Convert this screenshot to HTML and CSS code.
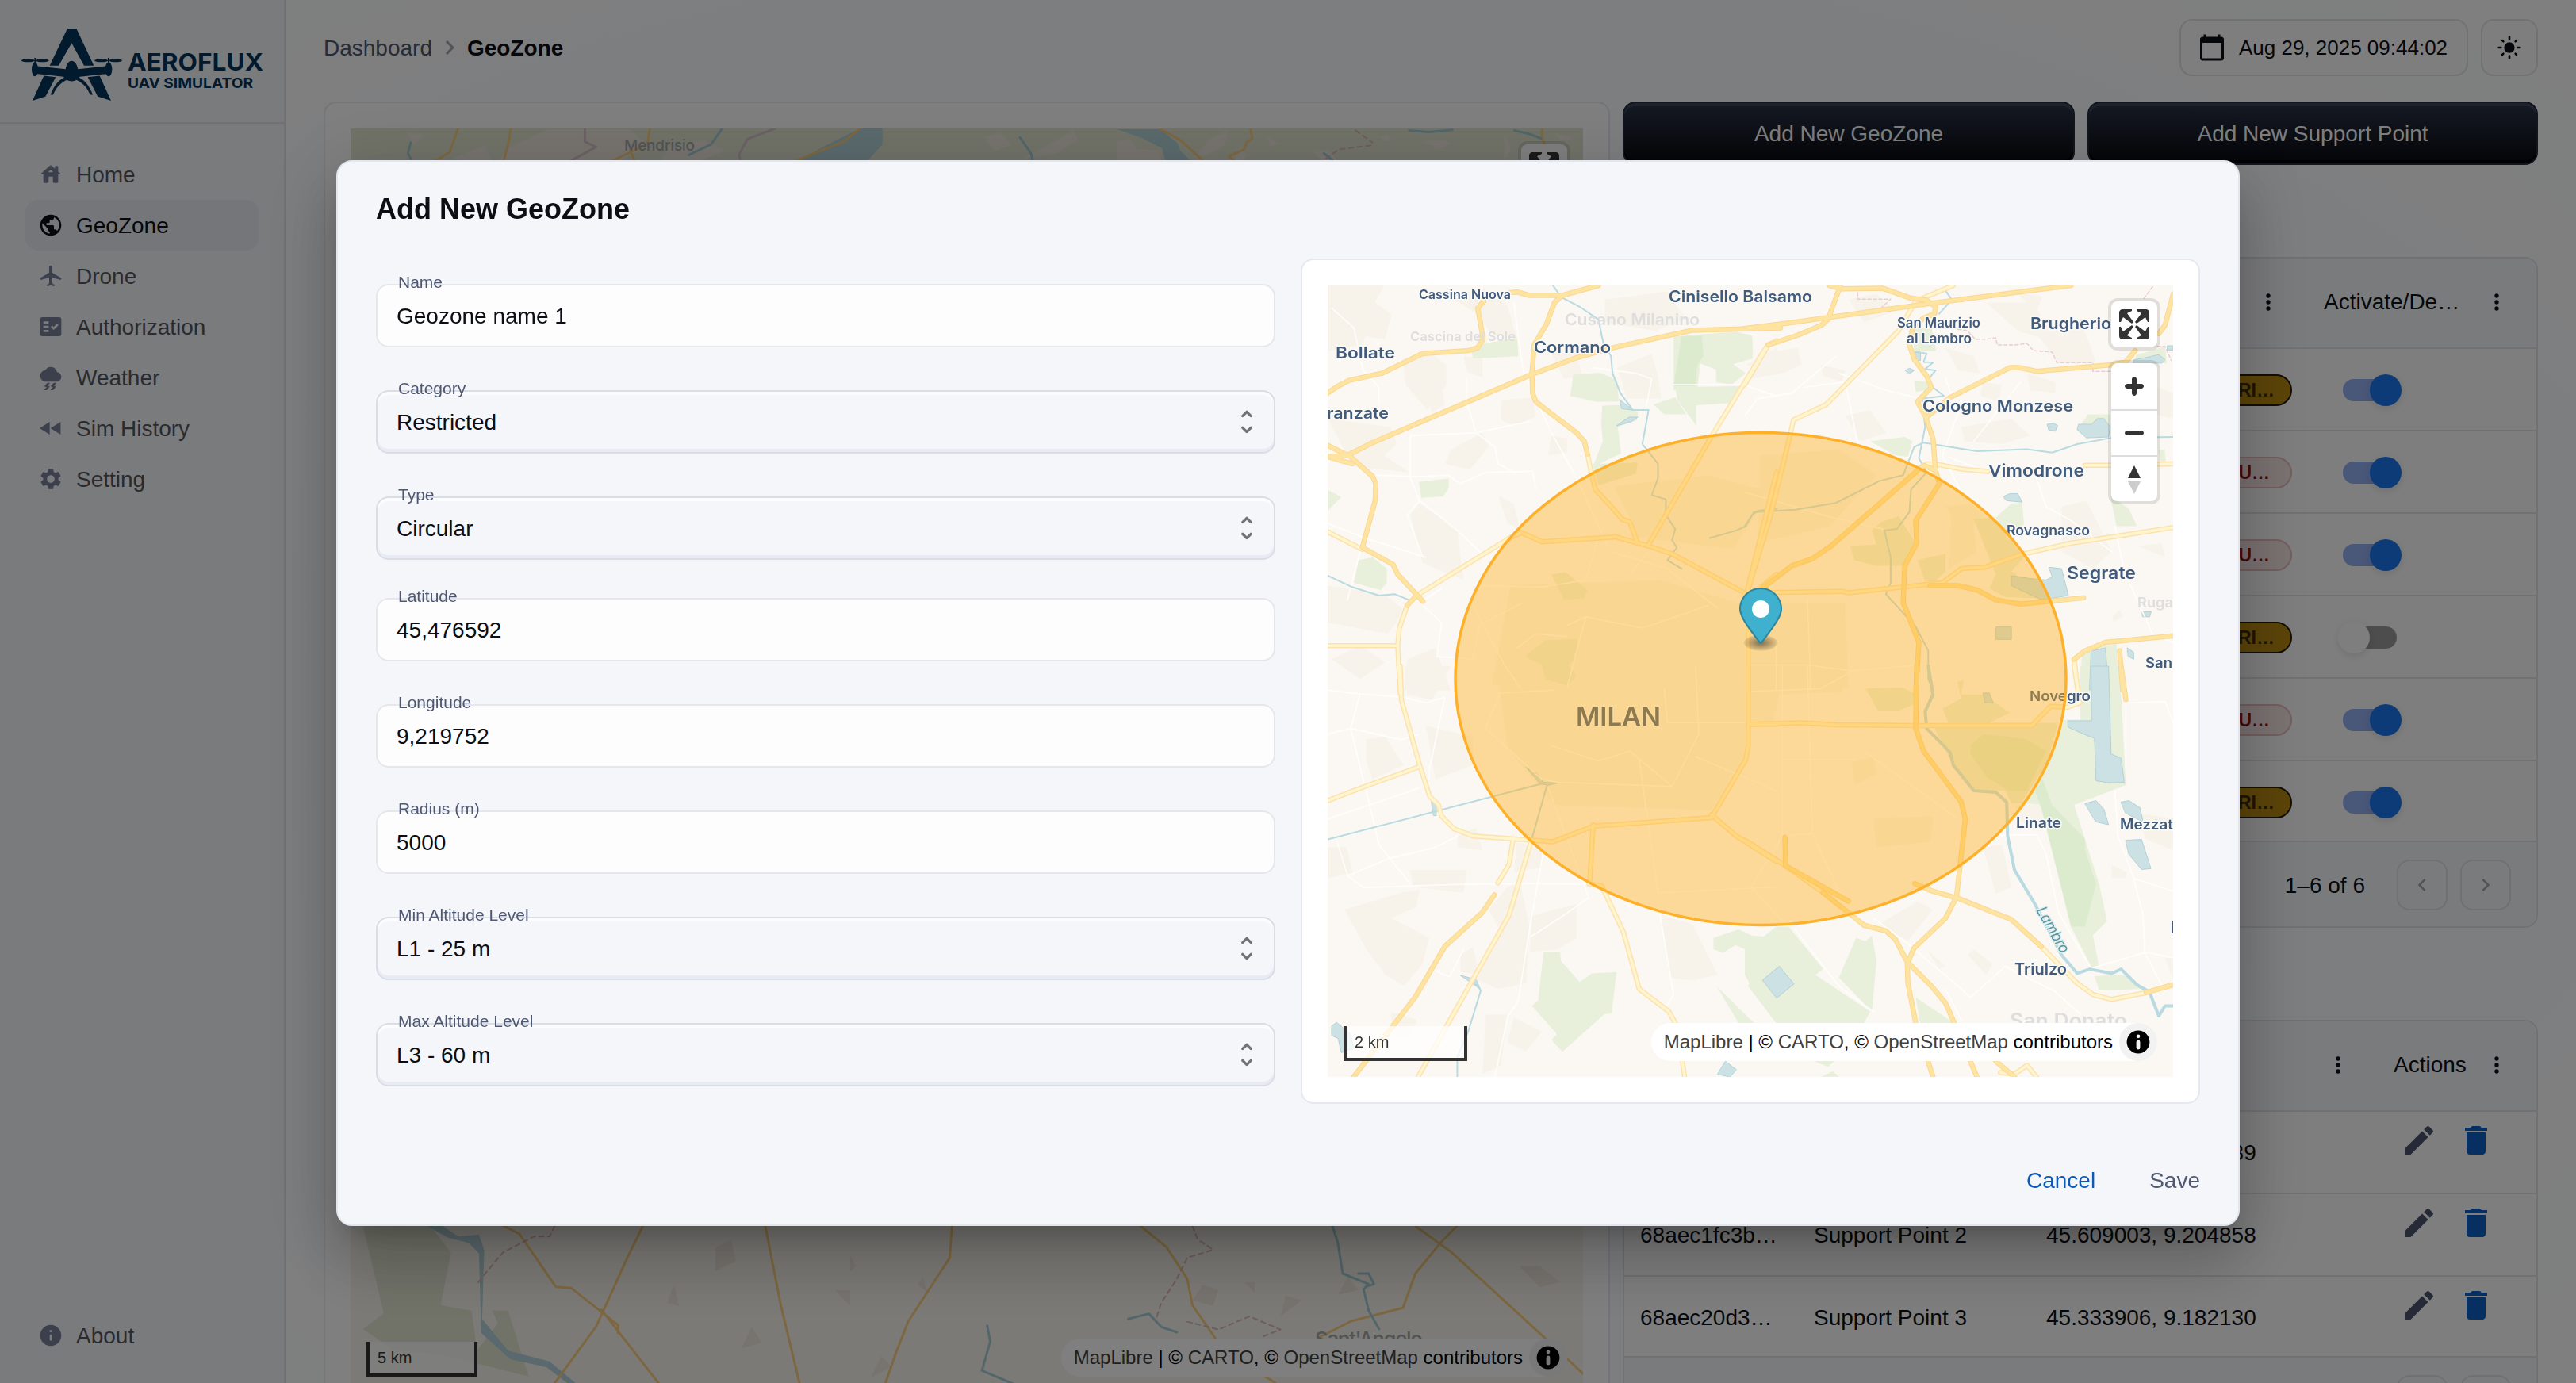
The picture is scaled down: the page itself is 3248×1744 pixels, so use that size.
FILE: index.html
```html
<!DOCTYPE html>
<html lang="en">
<head>
<meta charset="utf-8">
<title>Aeroflux UAV Simulator - GeoZone</title>
<link rel="stylesheet" href="styles.css">
</head>
<body>
<svg class="sprite" aria-hidden="true">
  <defs>
    <symbol id="i-more" viewBox="0 0 24 24"><circle cx="12" cy="6" r="2"/><circle cx="12" cy="12" r="2"/><circle cx="12" cy="18" r="2"/></symbol>
    <symbol id="i-info" viewBox="0 0 24 24"><path d="M12 2C6.48 2 2 6.48 2 12s4.48 10 10 10 10-4.48 10-10S17.52 2 12 2zm0 15c-.55 0-1-.45-1-1v-4c0-.55.45-1 1-1s1 .45 1 1v4c0 .55-.45 1-1 1zm1-8h-2V7h2v2z"/></symbol>
    <symbol id="i-edit" viewBox="0 0 24 24"><path d="M3 17.25V21h3.75L17.81 9.94l-3.75-3.75L3 17.25zM20.71 7.04c.39-.39.39-1.02 0-1.41l-2.34-2.34a1 1 0 0 0-1.41 0l-1.83 1.83 3.75 3.75 1.83-1.83z"/></symbol>
    <symbol id="i-delete" viewBox="0 0 24 24"><path d="M6 19c0 1.1.9 2 2 2h8c1.1 0 2-.9 2-2V7H6v12zM19 4h-3.5l-1-1h-5l-1 1H5v2h14V4z"/></symbol>
    <symbol id="i-prev" viewBox="0 0 24 24"><path d="M15.4 7.4 14 6l-6 6 6 6 1.4-1.4-4.6-4.6z"/></symbol>
    <symbol id="i-next" viewBox="0 0 24 24"><path d="M10 6 8.6 7.4l4.6 4.6-4.6 4.6L10 18l6-6z"/></symbol>
    <symbol id="i-unfold" viewBox="0 0 24 24"><path d="M12 5.83l2.46 2.46c.39.39 1.02.39 1.41 0 .39-.39.39-1.02 0-1.41L12.7 3.7a1 1 0 0 0-1.41 0L8.12 6.88c-.39.39-.39 1.02 0 1.41.39.39 1.02.39 1.41 0L12 5.83zm0 12.34l-2.46-2.46a1 1 0 0 0-1.41 0c-.39.39-.39 1.02 0 1.41l3.17 3.18c.39.39 1.02.39 1.41 0l3.17-3.17c.39-.39.39-1.02 0-1.41a1 1 0 0 0-1.41 0L12 18.17z"/></symbol>
    <symbol id="i-full" viewBox="0 0 29 29"><path d="M24 16v5.5c0 1.75-.75 2.5-2.5 2.5H16v-1l3-1.5-4-5.5 1-1 5.5 4 1.5-3h1zM6 16l1.5 3 5.5-4 1 1-4 5.5 3 1.5v1H7.5C5.75 24 5 23.25 5 21.5V16h1zm7-11v1l-3 1.5 4 5.5-1 1-5.5-4L6 13H5V7.5C5 5.75 5.75 5 7.5 5H13zm11 2.5V13h-1l-1.5-3-5.5 4-1-1 4-5.5-3-1.5V5h5.5c1.75 0 2.5.75 2.5 2.5z"/></symbol>
    <symbol id="i-attrib" viewBox="0 0 20 20"><path fill-rule="evenodd" d="M4 10a6 6 0 1 0 12 0 6 6 0 1 0-12 0m5-3a1 1 0 1 0 2 0 1 1 0 1 0-2 0m0 3a1 1 0 1 1 2 0v3a1 1 0 1 1-2 0"/></symbol>
  </defs>
</svg>

<div class="app">
  <aside class="sidebar">
    <div class="brand">
      <svg class="logo" viewBox="0 0 340 154" width="340" height="154">
        <g transform="scale(.3333 .4082)">
          <path d="M255 88h34l66 115h-37l-47-70-49 70h-34z"/>
          <path d="M166 234l45 4-39 60-49 13zM377 234l-45 4 38 60 50 13z"/>
          <path d="M136 204l112 10c4-17 12-26 23-26s20 9 24 26l112-10v24l-105 9c-8 9-18 14-31 14s-23-5-31-14l-104-9z"/>
          <ellipse cx="132" cy="214" rx="12" ry="22"/><ellipse cx="411" cy="214" rx="13" ry="22"/>
          <ellipse cx="106" cy="187" rx="26" ry="5"/><ellipse cx="160" cy="187" rx="25" ry="5"/>
          <ellipse cx="383" cy="187" rx="26" ry="5"/><ellipse cx="437" cy="187" rx="25" ry="5"/>
          <path d="M130 179h6v20h-6zM408 179h6v20h-6zM191 293c12-28 34-52 66-58l-4 12c-24 8-42 26-52 46zM351 293c-12-28-34-52-66-58l4 12c24 8 42 26 52 46z"/>
        </g>
        <text class="logo-name" x="161" y="88.500" textLength="171" lengthAdjust="spacingAndGlyphs">AEROFLUX</text>
        <text class="logo-sub" x="161" y="111" textLength="158" lengthAdjust="spacingAndGlyphs">UAV SIMULATOR</text>
      </svg>
    </div>
    <nav class="nav">
      <a class="nav-item"><svg class="ico" viewBox="0 0 24 24"><path d="M19 9.3V5c0-.55-.45-1-1-1h-1c-.55 0-1 .45-1 1v1.6l-3.33-3c-.38-.34-.96-.34-1.34 0l-8.36 7.53c-.34.3-.13.87.33.87H5v7c0 .55.45 1 1 1h3c.55 0 1-.45 1-1v-5h4v5c0 .55.45 1 1 1h3c.55 0 1-.45 1-1v-7h1.7c.46 0 .68-.57.33-.87L19 9.3zM10 10c0-1.1.9-2 2-2s2 .9 2 2h-4z"/></svg>Home</a>
      <a class="nav-item is-active"><svg class="ico" viewBox="0 0 24 24"><path d="M12 2C6.48 2 2 6.48 2 12s4.48 10 10 10 10-4.48 10-10S17.52 2 12 2zm-1 17.93c-3.95-.49-7-3.85-7-7.93 0-.62.08-1.21.21-1.79L9 15v1c0 1.1.9 2 2 2v1.93zm6.9-2.54c-.26-.81-1-1.39-1.9-1.39h-1v-3c0-.55-.45-1-1-1H8v-2h2c.55 0 1-.45 1-1V7h2c1.1 0 2-.9 2-2v-.41c2.93 1.19 5 4.06 5 7.41 0 2.08-.8 3.97-2.1 5.39z"/></svg>GeoZone</a>
      <a class="nav-item"><svg class="ico" viewBox="0 0 24 24"><path d="M21.48 13.7 13.5 9V3.5c0-.83-.67-1.5-1.5-1.5s-1.5.67-1.5 1.5V9l-7.98 4.7c-.33.2-.52.5-.52.9 0 .7.65 1.15 1.3.95l7.2-2.05V19l-1.8 1.2c-.5.5-.4 1.5.4 1.5l2.9-.8 2.9.8c.8 0 .9-1 .4-1.5L13.5 19v-5.5l7.2 2.05c.65.2 1.3-.25 1.3-.95 0-.4-.19-.7-.52-.9z"/></svg>Drone</a>
      <a class="nav-item"><svg class="ico" viewBox="0 0 24 24"><path d="M20 3H4c-1.1 0-2 .9-2 2v14c0 1.1.9 2 2 2h16c1.1 0 2-.9 2-2V5c0-1.1-.9-2-2-2zM10 17H5v-2h5v2zm0-4H5v-2h5v2zm0-4H5V7h5v2zm4.82 6L12 12.16l1.41-1.41 1.41 1.42L17.99 9l1.42 1.42L14.82 15z"/></svg>Authorization</a>
      <a class="nav-item"><svg class="ico" viewBox="0 0 24 24"><path d="M17.92 7.02C17.45 4.18 14.97 2 12 2 9.82 2 7.83 3.18 6.78 5.06 4.09 5.41 2 7.74 2 10.5 2 13.53 4.47 16 7.5 16h10c2.48 0 4.5-2.02 4.5-4.5 0-2.34-1.79-4.27-4.08-4.48zM14.8 17l-2.9 3.32 2 1L11.55 24h2.65l2.9-3.32-2-1L17.45 17zm-6 0-2.9 3.32 2 1L5.55 24H8.2l2.9-3.32-2-1L11.45 17z"/></svg>Weather</a>
      <a class="nav-item"><svg class="ico" viewBox="0 0 24 24"><path d="M11 18V6l-9.500 6 9.500 6zm.8-6 9.500 6V6l-9.500 6z"/></svg>Sim History</a>
      <a class="nav-item"><svg class="ico" viewBox="0 0 24 24"><path d="M19.14 12.94c.04-.3.06-.61.06-.94 0-.32-.02-.64-.07-.94l2.030-1.580c.18-.14.23-.41.12-.61l-1.920-3.320c-.12-.22-.37-.29-.59-.22l-2.390.96c-.5-.38-1.030-.7-1.620-.94l-.36-2.540c-.04-.24-.24-.41-.48-.41h-3.840c-.24 0-.43.17-.47.41l-.36 2.540c-.59.24-1.130.57-1.620.94l-2.390-.96c-.22-.08-.47 0-.59.22L2.740 8.870c-.12.21-.08.47.12.61l2.030 1.580c-.05.3-.09.63-.09.94s.02.64.07.94l-2.030 1.580c-.18.14-.23.41-.12.61l1.920 3.320c.12.22.37.29.59.22l2.390-.96c.5.38 1.030.7 1.620.94l.36 2.540c.05.24.24.41.48.41h3.840c.24 0 .44-.17.47-.41l.36-2.540c.59-.24 1.130-.56 1.620-.94l2.390.96c.22.08.47 0 .59-.22l1.920-3.320c.12-.22.07-.47-.12-.61l-2.010-1.580zM12 15.600c-1.980 0-3.600-1.620-3.600-3.600s1.620-3.600 3.600-3.600 3.600 1.620 3.600 3.600-1.620 3.600-3.600 3.600z"/></svg>Setting</a>
      <a class="nav-item nav-about"><svg class="ico"><use href="#i-info"/></svg>About</a>
    </nav>
  </aside>

  <main class="main">
    <header class="topbar">
      <div class="crumbs"><span>Dashboard</span><svg class="crumb-sep" viewBox="0 0 24 24"><use href="#i-next"/></svg><b>GeoZone</b></div>
      <div class="tools">
        <div class="tool date"><svg class="cal" viewBox="0 0 24 24"><path d="M20 3h-1V1h-2v2H7V1H5v2H4c-1.100 0-2 .9-2 2v16c0 1.100.9 2 2 2h16c1.100 0 2-.9 2-2V5c0-1.100-.9-2-2-2zm0 18H4V8h16v13z"/></svg>Aug 29, 2025 09:44:02</div>
        <div class="tool sun"><svg class="ico" viewBox="0 0 24 24"><circle cx="12" cy="12" r="5"/><path class="rays" d="M12 2v2M12 20v2M2 12h2M20 12h2M5.300 5.300l1 1M17.700 17.700l1 1M5.300 18.700l1-1M17.700 6.300l1-1"/></svg></div>
      </div>
    </header>

    <div class="content">
      <section class="map-card page-map">
        <div class="map">
          <svg class="map-svg" viewBox="0 0 1554 1594" width="1554" height="1594">
            <rect width="1554" height="1594" fill="#f8f5ee"/>
            <rect class="g2" width="1554" height="200"/>
            <g transform="translate(-82 -162) scale(.7015 .3333)">
              <path class="b2" d="M440 520l30-30h150l30 60-60 70H380l20-60zM690 560l60-30 40 40-60 50h-60zM300 600l60-50 10 70zM1255 520l30-20 20 50-30 20zM1395 520l20-30 10 40-40 50-60 20zM220 500l30 10-20 40z"/>
              <path class="w2" d="M1033 486h40v60l-30 70H915l60-70z"/>
              <path class="r2" d="M310 486l-15 90-40 50M405 486l-5 60-10 80M655 486l-5 60-30 30-50 50M620 570l10 50M1033 486l-30 50-95 80"/>
              <path class="v2" d="M538 486l0 50 20 20-60 70M880 486l-50 40-15 60 5 40"/>
              <path class="c2" d="M225 540l-5 40 10 40M785 486l-20 60-40 40M1320 520l20 60 5 46"/>
            </g>
            <g transform="translate(958 -42) scale(.4209 .3415)">
              <path class="b2" d="M20 170l40-10 20 40 70 5 0 40H20zM300 160l50-30-10 60-50 30-40 10zM370 240l20-50 20 30-20 30zM470 150l30 30-20 10zM610 210l40-10 30 40-40 10zM810 155l20-10 10 20-20 5zM940 170l60-5 20 15-40 20zM1180 140l20 60-20 40zM1330 140l60 20-40 10z"/>
              <path class="w2" d="M20 126h130l50 50 10 30 35 40H165l-10-50-65-40z"/>
              <path class="r2" d="M150 126l60 40 80 90M420 126l5 35-15 10-10 30-45 25 30 30M1293 126l0 30 12 40"/>
              <path class="c2" d="M895 130l60 6 70-8M1210 130l50 15 30 15M640 215l30 30"/>
              <path class="d2" d="M735 130l50 45M645 235l40-35 100-15"/>
            </g>
            <g transform="translate(-442 1338) scale(1.3074 .3333)">
              <path class="g2" d="M350 138h65l20 100-10 200 30 20 5 150 20-100-5-50 15 0 20 250-80-80-50-20-30-80 20-60z"/>
              <path class="b2" d="M690 220l15-30 5 80-20 40zM820 250l5 40-5 20zM890 330l5 60-10-30zM805 380l15 0 0 60zM920 250l5 50zM650 360l5 80-12-10zM1160 360l15 20-5 60-20-20zM1240 400l15 20-20 60zM1300 330l10 50-20 20zM1200 350l10 0 0 40zM1465 290l20 0 20 60-20 20zM850 630l10 40-20 40zM725 520l10 60-20 20z"/>
              <path class="w2" d="M412 138h15l15 40 20-8 5 60-2 260 25 120 40 40 25 82h-8l-20-60-35-30-28-100-2-300-10-40-20-20z"/>
              <path class="r2" d="M486 138l15 30 35 200 15 5 45 140 0 30M620 138l-15 120-30 260-40 214M580 455l55 277M738 138l15 300 18 294M918 138l-2 120-40 240-12 120-10 114M1100 138l25 80 20 120 5 100 30 170 50 124M1365 138l35 100 100 360 27 100M1405 138l-15 60-25 120-12 130-50 50-30 60"/>
              <path class="c2" d="M1285 138l5 60 5 120 25 40-5 20 5 80 10 70M1310 318l10 0 5 40-8 10M952 515l3 60-8 110 30 50M1088 490l20-20 12 50 15 20"/>
              <path class="d2" d="M1150 138l5 50 15 40-25 30-10 80-15 90-5 60M535 138l-5 40-15 0-30 60-15 70-10 50M1145 500l30 30 30-50 30 50-20 30"/>
            </g>
            <text class="lbl-soft2" x="345" y="28" font-size="19" textLength="89">Mendrisio</text>
            <text class="lbl-soft2" x="1216" y="1536" font-size="26" textLength="136">Sant'Angelo</text>
          </svg>
          <div class="ctrl-stack"><div class="ctrl-group"><span class="ctrl"><svg viewBox="0 0 29 29"><use href="#i-full"/></svg></span></div></div>
          <div class="scale scale-5">5 km</div>
          <div class="attrib"><span><a>MapLibre</a> | © <a>CARTO</a>, © <a>OpenStreetMap</a> contributors</span><svg class="attrib-i"><use href="#i-attrib"/></svg></div>
        </div>
      </section>

      <section class="side">
        <div class="cta-row"><button class="cta">Add New GeoZone</button><button class="cta">Add New Support Point</button></div>
        <div class="table zones">
          <div class="row head"><div class="cell end"><svg class="ico"><use href="#i-more"/></svg></div><div class="cell spread">Activate/De…<svg class="ico"><use href="#i-more"/></svg></div></div>
          <div class="row"><div class="cell end"><span class="pill gold">RI…</span></div><div class="cell"><i class="switch on"></i></div></div>
          <div class="row"><div class="cell end"><span class="pill red">U…</span></div><div class="cell"><i class="switch on"></i></div></div>
          <div class="row"><div class="cell end"><span class="pill red">U…</span></div><div class="cell"><i class="switch on"></i></div></div>
          <div class="row"><div class="cell end"><span class="pill gold">RI…</span></div><div class="cell"><i class="switch"></i></div></div>
          <div class="row"><div class="cell end"><span class="pill red">U…</span></div><div class="cell"><i class="switch on"></i></div></div>
          <div class="row last"><div class="cell end"><span class="pill gold">RI…</span></div><div class="cell"><i class="switch on"></i></div></div>
          <div class="foot"><span class="range">1–6 of 6</span><span class="pg"><svg class="ico"><use href="#i-prev"/></svg></span><span class="pg"><svg class="ico"><use href="#i-next"/></svg></span></div>
        </div>
        <div class="table points">
          <div class="row head"><div class="cell"></div><div class="cell"></div><div class="cell end"><svg class="ico"><use href="#i-more"/></svg></div><div class="cell spread">Actions<svg class="ico"><use href="#i-more"/></svg></div></div>
          <div class="row"><div class="cell"></div><div class="cell"></div><div class="cell">45.478340, 9.123439</div><div class="cell acts"><svg class="edit"><use href="#i-edit"/></svg><svg class="del"><use href="#i-delete"/></svg></div></div>
          <div class="row"><div class="cell">68aec1fc3b…</div><div class="cell">Support Point 2</div><div class="cell">45.609003, 9.204858</div><div class="cell acts"><svg class="edit"><use href="#i-edit"/></svg><svg class="del"><use href="#i-delete"/></svg></div></div>
          <div class="row last"><div class="cell">68aec20d3…</div><div class="cell">Support Point 3</div><div class="cell">45.333906, 9.182130</div><div class="cell acts"><svg class="edit"><use href="#i-edit"/></svg><svg class="del"><use href="#i-delete"/></svg></div></div>
          <div class="foot"><span class="pg"></span><span class="pg"></span></div>
        </div>
      </section>
    </div>
  </main>
</div>

<div class="backdrop">
  <div class="modal">
    <h2 class="modal-title">Add New GeoZone</h2>
    <div class="modal-body">
      <div class="fields">
        <div class="field"><label>Name</label>Geozone name 1</div>
        <div class="field select"><label>Category</label>Restricted<svg class="unfold"><use href="#i-unfold"/></svg></div>
        <div class="field select tight"><label>Type</label>Circular<svg class="unfold"><use href="#i-unfold"/></svg></div>
        <div class="field"><label>Latitude</label>45,476592</div>
        <div class="field"><label>Longitude</label>9,219752</div>
        <div class="field"><label>Radius (m)</label>5000</div>
        <div class="field select"><label>Min Altitude Level</label>L1 - 25 m<svg class="unfold"><use href="#i-unfold"/></svg></div>
        <div class="field select"><label>Max Altitude Level</label>L3 - 60 m<svg class="unfold"><use href="#i-unfold"/></svg></div>
      </div>
      <div class="map-card">
        <div class="map">
          <svg class="map-svg" viewBox="0 0 1066 998" width="1066" height="998">
            <defs>
              <g id="pale">
                <g transform="translate(-54 -50) scale(.3954 .3571)"><path d="M390 1270L365 1350 360 1410 368 1580M137 1412H360M1568 335L1540 350 1365 665 1160 1055M965 735L975 790 990 860 1040 920 1075 965 1100 975 1125 1050M137 1010L247 1072M420 1235L720 1030 755 1013 820 1045 1055 1028 1160 1060 1235 1088 1465 1225M1568 800L1475 1215M1478 1215V1580M1568 1160L1520 1205"/></g>
                <g transform="translate(526 -50) scale(.3954 .3571)"><path d="M665 140L545 195 490 300 260 560 155 615 140 690 80 960 10 1215M580 770H605L690 788 775 797M1085 775L1170 775 1366 770M1366 995L1040 1050 880 1090 765 1135 690 1140 630 1190 330 1225 310 1220 60 1225M0 490L75 350M1050 1460L1062 1568"/></g>
                <g transform="translate(-54 480) scale(.3954 .3571)"><path d="M368 0L372 120 430 350 462 460 490 490 500 530 540 575 600 600 790 615 855 620 985 565 1360 535 1470 330 1478 280V0M983 560L972 770M1485 205H1568M1360 525L1440 600 1568 690M137 475L255 425 430 355M728 610L715 700 680 765M785 620L715 880 425 1450M970 770L1010 775 1080 940 1130 1140 1225 1220 1250 1270 1275 1450"/></g>
                <g transform="translate(526 480) scale(.3954 .3571)"><path d="M1050 0L1068 130 1030 145 975 142 915 210H550L290 207 180 200 20 205M0 615L130 705 250 800M945 990L1060 1120 1110 1160 1170 1177 1280 1153M815 1435L860 1440 900 1410 930 1450"/></g>
              </g>
              <g id="major">
                <g transform="translate(-54 -50) scale(.3954 .3571)"><path d="M720 165L740 163 780 175H885M1000 140L885 175 860 200 835 275 795 350 788 450 790 520 800 550 870 610 930 660 955 690 965 735M635 195L615 220 625 280 632 330 615 360 585 370 440 380 310 450 205 475 170 495 137 520M137 745L200 740 280 695 785 455 930 395 1045 360 1300 298 1580 290M137 705L210 745 280 815 290 840 288 900 247 1065 345 1125 360 1160 440 1255M137 745L215 770M390 1270L420 1235"/></g>
                <g transform="translate(526 -50) scale(.3954 .3571)"><path d="M0 292L155 270 580 205 1040 140M270 140L310 152 440 150 530 185 580 192 608 215 605 240 570 255 535 290 525 350 540 400 580 460 595 500 550 550 575 600 600 680 608 790 620 840 545 970 548 1050 510 1130 505 1260 555 1400 545 1580M75 350L170 315 245 280 265 260 305 140M580 605L655 535 845 430 875 430 930 443 1170 420 1215 410 1245 370M1366 170L1340 280 1320 310M600 790L570 775 275 1060 215 1105 150 1130 60 1205M590 1200H680L740 1215 800 1250 880 1265 1080 1243M1366 1377L1150 1400 1085 1430 1050 1460M1195 1430L1205 1568"/></g>
                <g transform="translate(-54 480) scale(.3954 .3571)"><path d="M668 808L630 870 510 990 415 1170 220 1450"/></g>
                <g transform="translate(526 480) scale(.3954 .3571)"><path d="M1200 0L1215 118M548 0L545 220 570 300 690 480 703 540 675 815 640 890 540 995 518 1050 520 1120 545 1260 600 1450M250 800L330 870 380 915 450 935 480 965 518 1045 595 1130 640 1190 660 1240 740 1450M128 605L130 705 330 830M542 768L600 795 680 820 850 895 945 990M1280 1153L1366 1125M800 1395L860 1450"/></g>
              </g>
            </defs>
            <rect width="1066" height="998" fill="#fbf8f3"/>
            <g class="beige">
              <g transform="translate(-54 -50) scale(.3954 .3571)"><path d="M137 140h180l-30 60 50 40-10 60-60-10-20 60-110 20zM375 400l80-30 60 50 0 70-60 90-70-90zM440 480l60 20 10 60-40 30zM530 180l100-30 80 60 30 120-80-20-50-70zM690 545l100-10 10 70-70 30-40-20zM137 610l200 30 20 60-40 40 80 60-180-20zM570 390l60 5 0 70-50-20zM850 380l80 0 20 80-60 10zM1020 190l200-30 60 100-100 40-160-30zM1060 430l110-50 20 80 10 80-110 0zM400 950l30-40 120 90 20 180-130-60zM137 1200l180 30 70 60-60 80-190-40zM150 1460l90-50 80 60-80 60zM530 720l100-60 20 50-60 80-80-20zM850 670l50 10 0 50-60 10zM680 880l50 30 20 90-40-20zM210 260l60-30 70 10-20 90-60-10zM390 1460l90-40 50 150h-150zM1470 420l98-60v80zM720 1200l480-20 300 100 60 280-400 20-500-30zM1050 850l300-40 200 60-120 200-300-40z"/></g>
              <g transform="translate(526 -50) scale(.3954 .3571)"><path d="M40 380l130-20 10 60-60 30-100 20zM330 190l90-20 60 60-100 40zM240 420l80 20-10 40-60-20zM320 600l80-20 50 80-80 30zM640 360l90 30 20 60-70-10zM690 640l160-30 60 60-90 30-120-10zM930 310l150-20 40 120-120 0zM770 200l150 0 70 140-120-40zM1010 920l80-20 80 180-60 60-100-60zM640 920l80-10 40 40-60 60zM1240 320l60 0 20 40h-60zM1250 470l116 50v90l-80-20zM900 450l90 30 0 40-80-10zM1250 1060l80-10 10 50zM1170 1310l25-25 12 25-30 15zM860 160l90 20-20 50zM760 480l60 10-10 60-60-20zM50 740l250-20 120 90-150 180-230 60zM-20 1260l340 0 10 300H-20zM660 930l60-20 20 170-90 60z"/></g>
              <g transform="translate(-54 480) scale(.3954 .3571)"><path d="M380 0h150l-60 120-80-20zM260 260l60-10 60 100-100 50-20-60zM450 210l150 40 0 100-120 50zM190 860l180-60 60-10-10 60-80 40 120 70-20 90-60 80-60-40-60-90zM400 720l180 0-10 80-160-20zM650 860l60-80 40-20 30 160-10 200-90 20-80-40 90-160zM550 600l60-30 20 80-80-10zM790 880l140-40 0 120-60 40-90 10zM1200 880l100 30 80 180-80 20-70-10zM730 1240l90 50-50 70-60-30zM560 1080l60 10-20-100-40 30zM640 1230l70 0-20 180-60 30zM340 1220l80 30-20 60-60-10zM740 620l80 30 0 60-90 20zM137 640l60 0 20 90-80 20zM680 40l800-30 0 300-120 200-500-20-150-200z"/></g>
              <g transform="translate(526 480) scale(.3954 .3571)"><path d="M430 910l120-80 50 30-80 110-90-50zM760 640l60-10 30 150-50 25zM730 1000l60 50-20 40-60-70zM1260 520l106 20v110l-90-40zM1170 700l50 30-10 20-40 0zM580 1000l60 60-20 10zM860 490h100l20 60-100 0zM1340 1030h26v80zM0 20h320l-10 70-200 10-20 100H0zM340 340l70-20 10 60-70 40zM410 540l190-10-10 90-170 20z"/></g>
            </g>
            <g class="green">
              <g transform="translate(-54 -50) scale(.3954 .3571)"><path d="M1240 320l200-17 50 15v80l-60 20 40 32-45 40-50-8v-45l-50-22-10 95h-75zM1245 500l210-5-35 60-108 8 0 72-60-90zM920 455l85-7 55 27 5 75-75 0-80-20zM1012 565l50-3 65 25-5 30-60 22 10 95-90 46 32-90-5-60zM1175 560l70-25 35 60-70 0zM595 370l40-25 105-20 5 65-145 8zM428 833l95-11v33l-18 30-70 5zM137 862l43 25-43 48zM235 1110l45-10 45 40v50l-20 25-85-25zM850 1160l45-8 70 63-10 30-65 5zM765 1450l65-57 102-5v62l-27 30 25 40-30 33-70-23-10-50zM980 770l145-5-5 40-120 40z"/></g>
              <g transform="translate(526 -50) scale(.3954 .3571)"><path d="M540 475l45 5v30l-40 5zM400 690l110-15 25 15-15 55-40-5zM1095 595l70 0v45l-105 10zM1250 385l90-30 5 60-105-5zM1165 880l60 50 25 60h-65zM850 910l35-5 5 80-60 30-30-55zM730 965l60-5 100 140-40 50 40 30 60 65-120-5-50-30 20-50zM435 975l55-20 55 95-40 80-85 0-70-20-15-50 85-5-15-50zM550 1110l90-23v63l-35 35h-30zM1075 1430l110-25 8 163h-123zM535 295l60-5 15 80-70 5zM0 330h25v68H0zM1318 720l20 0 5 45-15 5z"/></g>
              <g transform="translate(-54 480) scale(.3954 .3571)"><path d="M825 1008l53 2 2 30 60 75 40-30 78-5-16 145-24 5-133 132-35-42 18-20-80-100 20-20z"/></g>
              <g transform="translate(526 480) scale(.3954 .3571)"><path d="M1070 0h125l20 420-165 70 80 280 25 130-45 50 20 115-25-3-65-142-90-430-70-5 45-45 95-250h50zM385 80l115-5 40 20v40l-50 23h-65zM630 150l60-35-12-60 20-5-8 50 70 0 85 65-65 35h220l-40 150-80 135-30 0-20-45-100 0-70-100-55-120 45-20zM1115 1095l105-5 55 50-145 5zM0 950l60 5 40-35h40l110 150-25 20 20 15 155 115-20 40H100l-90-130 5-10-15-30 0-50 0 0zM300 1100l55-140 30 12 20-20 15 88-15 180zM545 1170l135 100H560zM210 1390h80l-25 25zM245 1450l35-20 20 20z"/><path d="M-100 960L-20 930 20 950 40 990 0 1000-30 985-70 1013-100 1000zM-90 1130L10 1240 30 1260-20 1260z"/></g>
            </g>
            <g class="deep">
              <g transform="translate(-54 -50) scale(.3954 .3571)"><path d="M1265 320l65-2 5 70-20 35-5 72-70 0z"/></g>
              <g transform="translate(526 480) scale(.3954 .3571)"><path d="M925 440l25-40 30 90 105 120 0 40 35 120-35 150-45 0-95-420zM720 280l40-40 80 10 60 10 60 40-60 140-60 0-70-50-50-80z"/></g>
            </g>
            <g class="water">
              <g transform="translate(-54 -50) scale(.3954 .3571)"><path d="M1068 543l42 37-35-5zM1058 635l40-30 28 0-20 15zM365 1500h8v20h-8z"/></g>
              <g transform="translate(526 -50) scale(.3954 .3571)"><path d="M1065 630l40 0 20-20 20 0 20 30-5 35-70 3-30-28zM965 630l20-3 13 8-8 20-20-5zM825 885l20-10 25 0 15 30-50-5zM970 1135l40 5 22 95-87 15-95-50v-35l60 10 50 5 20-10zM1105 1430l45-10 10 148h-60zM1242 402l48-10 30-8 20 18-10 12-90 0zM512 440l13-8 15 8-15 12zM540 375h20v30h-20zM802 1345h48v45h-48zM1220 1420l20 15v25l-17-10zM1268 1292l28 0-5 18-22 0zM1348 353h18v15h-18z"/></g>
              <g transform="translate(-54 480) scale(.3954 .3571)"><path d="M150 1270l15-12 45 42 10 50-40 15-10-50-20-10zM1380 1440l25-45 35 30-20 25zM560 1092l50 15 15 38-15-15zM468 480l15 10 0 38-8 0zM770 358l35 22 20 30 45 3-30 8-25-5z"/></g>
              <g transform="translate(526 480) scale(.3954 .3571)"><path d="M1105 0h55l8 310 32 15 10 85-50 2-40-7-5-150-35-15-50-25v-22h75zM1085 485l35-10 25 30 15 55-40-10zM1200 480l25-5 35 25 10 50-55-30zM1215 615l50-3 30 103-30 3-40-53zM57 1108l53-48 47 62-55 50zM760 95h20l12 35-25 0z"/></g>
            </g>
            <g class="streets">
              <g transform="translate(-54 -50) scale(.3954 .3571)"><path d="M150 220L220 290 250 440 300 500 300 560M580 470L580 550 610 660 670 710 680 770 730 800 790 795M400 670L610 660 780 620M730 200L760 440 850 660 930 820 980 940 1030 1060M400 670L400 820 430 900 550 1005 640 1100M290 810L420 815 520 810 560 840 640 800 790 795 800 860M137 980L250 1030 450 1100M430 900L390 950 440 1100M200 1250L240 1080M500 1210L430 1260 500 1330 485 1450 600 1460 620 1340 760 1260M980 430L1120 450 1170 470 1150 580M1240 490L1460 490 1568 530M610 1200L820 1205 960 1180 1000 1030M960 1310L1140 1350 1350 1270M740 1420L800 1370 900 1380M900 1340L960 1310 900 1560M1100 1160L1160 1080M1040 1080L1220 1140 1380 1280M590 1250L700 1480 750 1560"/></g>
              <g transform="translate(526 -50) scale(.3954 .3571)"><path d="M0 600L40 540 150 520 290 390M300 450L450 510 560 540M360 700L320 480 190 500M640 470L680 590 630 740 690 870M880 480L730 690M930 820L960 920 1040 970 1170 1080M1180 990L1210 1150 1300 1370M1300 1370L1366 1400M650 745L750 790M20 1480L200 1480 340 1500 560 1480M100 1400V1568M200 1250L210 1568M0 870L280 960 440 1000"/></g>
              <g transform="translate(-54 480) scale(.3954 .3571)"><path d="M137 85L240 98 380 110 450 130 510 110M510 110L460 370 460 400M210 220L270 490 300 630 400 770M137 240L210 220 370 260 430 240M240 98L210 220M137 540L270 490 430 430M165 615L200 740 250 782 570 770 800 768 970 770M200 740L330 680 480 640 550 600M840 430L970 820M830 620L780 930 745 1180 710 1240 670 1450M785 955L890 880 965 820M480 1075L525 1098 570 1000M1195 870L1240 1160 1210 1215M685 95L860 85M1210 80L1220 200 1568 200M640 220L820 400 870 410 1235 425 1320 240 1310 0M685 95L640 220M850 280L1000 335 1100 300 1235 425M1130 330L1190 800M1310 320L1568 440M1190 800L1568 780"/></g>
              <g transform="translate(526 480) scale(.3954 .3571)"><path d="M810 598L930 595 960 660 1000 870 1100 1060M1180 440L1190 600 1240 750 1270 880 1275 1010 1340 1150M1240 750L1366 795M1110 1065L1280 1010 1366 1030M1215 118L1215 360M1215 130L1340 125 1366 200M160 930L300 1130 410 1220M410 890L520 980 680 1130 720 1170 830 1060 990 1150 1070 1230M640 1140L690 1250M120 0L120 600 215 590 330 870M215 590L200 0M0 90L240 80 340 20M120 330H350M380 300L680 540M120 600L20 780 120 900"/></g>
            </g>
            <g class="dash"><g transform="translate(526 -50) scale(.3954 .3571)"><path d="M360 165V188H465L430 225M680 295L710 300 735 330 770 330 800 325 805 350 860 350 900 345 920 370 980 375 995 412 1110 412V443H1170M1300 145L1270 190M1280 355H1340L1360 405"/></g></g>
            <g class="river">
              <g transform="translate(-54 -50) scale(.3954 .3571)"><path d="M855 140L880 180 940 215 1000 260 1015 340 1040 390 1045 450 1070 520 1110 580 1160 580 1140 700 1190 770 1190 820 1170 880 1215 895 1215 950 1245 1000 1235 1040 1250 1065 1220 1110 1265 1140M137 1165L215 1205 300 1235 350 1230 395 1250M1355 1032L1440 1005 1470 990 1490 950 1510 935 1568 928"/></g>
              <g transform="translate(526 -50) scale(.3954 .3571)"><path d="M0 990L30 940 160 932 290 908 430 830 505 810 540 710 570 695 740 725 900 718 980 730 1060 700 1170 678 1366 675M635 150L660 190 620 240M545 375L580 380 570 410 600 412 575 435 608 440 590 465M600 500L635 530 565 540 575 640 555 750 580 800 530 860 525 940 485 1000 445 1005 465 1100 465 1190 450 1230 545 1345 585 1430 585 1530 600 1568"/></g>
              <g transform="translate(-54 480) scale(.3954 .3571)"><path d="M137 612L820 415M835 425L785 620M600 1110L625 1145 585 1290 550 1380V1450"/></g>
            </g>
            <g class="river wide"><g transform="translate(526 480) scale(.3954 .3571)"><path d="M585 0L600 100 575 160 580 220 655 305 665 350 730 440 800 445 835 480 838 600 860 720 925 840 1010 1020 1060 1085 1100 1070 1170 1085 1200 1070 1250 1125 1290 1150 1320 1235 1340 1200 1366 1200"/></g></g>
            <use href="#pale" class="pale-case"/><use href="#pale" class="pale-fill"/>
            <use href="#major" class="major-case"/><use href="#major" class="major-fill"/>
            <g class="labels">
              <text x="115" y="17" font-size="16.500" textLength="116" lengthAdjust="spacingAndGlyphs">Cassina Nuova</text>
              <text x="430" y="21" font-size="20" textLength="181" lengthAdjust="spacingAndGlyphs">Cinisello Balsamo</text>
              <text class="soft" x="299" y="50" font-size="20" textLength="170" lengthAdjust="spacingAndGlyphs">Cusano Milanino</text>
              <text class="soft" x="104" y="70" font-size="16.500" textLength="133" lengthAdjust="spacingAndGlyphs">Cascina del Sole</text>
              <text x="10" y="92" font-size="20" textLength="75" lengthAdjust="spacingAndGlyphs">Bollate</text>
              <text x="260" y="85" font-size="20" textLength="97" lengthAdjust="spacingAndGlyphs">Cormano</text>
              <text x="-1" y="168" font-size="20" textLength="78" lengthAdjust="spacingAndGlyphs">ranzate</text>
              <text x="718" y="53" font-size="17" textLength="105" lengthAdjust="spacingAndGlyphs">San Maurizio</text>
              <text x="730" y="73" font-size="17" textLength="82" lengthAdjust="spacingAndGlyphs">al Lambro</text>
              <text x="886" y="55" font-size="20" textLength="102" lengthAdjust="spacingAndGlyphs">Brugherio</text>
              <text x="750" y="159" font-size="20" textLength="190" lengthAdjust="spacingAndGlyphs">Cologno Monzese</text>
              <text x="833" y="241" font-size="20.500" textLength="121" lengthAdjust="spacingAndGlyphs">Vimodrone</text>
              <text x="856" y="315" font-size="17" textLength="105" lengthAdjust="spacingAndGlyphs">Rovagnasco</text>
              <text x="932" y="370" font-size="21" textLength="87" lengthAdjust="spacingAndGlyphs">Segrate</text>
              <text class="soft" x="1021" y="406" font-size="17" textLength="45" lengthAdjust="spacingAndGlyphs">Ruga</text>
              <text x="1031" y="482" font-size="17" textLength="34" lengthAdjust="spacingAndGlyphs">San</text>
              <text x="313" y="555" font-size="33" textLength="107" lengthAdjust="spacingAndGlyphs">MILAN</text>
              <text x="885" y="524" font-size="17" textLength="77" lengthAdjust="spacingAndGlyphs">Novegro</text>
              <text x="868" y="684" font-size="18" textLength="57" lengthAdjust="spacingAndGlyphs">Linate</text>
              <text x="999" y="686" font-size="18" textLength="67" lengthAdjust="spacingAndGlyphs">Mezzat</text>
              <text x="866" y="869" font-size="19.500" textLength="66" lengthAdjust="spacingAndGlyphs">Triulzo</text>
              <text class="soft" x="860" y="936" font-size="25" textLength="148" lengthAdjust="spacingAndGlyphs">San Donato</text>
              <text class="creek" transform="translate(893 788) rotate(60)" font-size="19" textLength="64" lengthAdjust="spacingAndGlyphs">Lambro</text>
            </g>
            <path fill="#405b7c" d="M1064 801h2v16h-2z"/>
            <ellipse class="zone" cx="546" cy="496" rx="385" ry="310.500"/>
          </svg>
          <svg class="pin" viewBox="0 0 27 41" width="54" height="82">
            <defs><radialGradient id="pin-shade"><stop offset=".1" stop-opacity=".45"/><stop offset="1" stop-opacity=".08"/></radialGradient></defs>
            <ellipse cx="13.500" cy="34.800" rx="10.500" ry="5" fill="url(#pin-shade)"/>
            <path fill="#3fb1ce" d="M27,13.500C27,19.070 20.250,27 14.750,34.500C14.020,35.500 12.980,35.500 12.250,34.500C6.750,27 0,19.220 0,13.500C0,6.040 6.040,0 13.500,0C20.960,0 27,6.040 27,13.500Z"/>
            <path fill="none" stroke="#000" stroke-opacity=".25" d="M26.500,13.500C26.500,18.900 19.900,26.700 14.350,34.200C13.800,34.950 13.200,34.950 12.650,34.200C7.100,26.700 .5,18.900 .5,13.500C.5,6.300 6.300,.5 13.500,.5C20.700,.5 26.500,6.300 26.500,13.500Z"/>
            <circle cx="13.500" cy="13.500" r="5.500" fill="#fff"/>
          </svg>
          <div class="ctrl-stack">
            <div class="ctrl-group"><span class="ctrl"><svg viewBox="0 0 29 29"><use href="#i-full"/></svg></span></div>
            <div class="ctrl-group">
              <span class="ctrl"><svg viewBox="0 0 29 29"><path d="M14.500 8.500c-.75 0-1.500.75-1.500 1.500v3h-3c-.75 0-1.500.75-1.500 1.500S9.250 16 10 16h3v3c0 .75.75 1.500 1.500 1.500S16 19.750 16 19v-3h3c.75 0 1.500-.75 1.500-1.500S19.750 13 19 13h-3v-3c0-.75-.75-1.500-1.500-1.500z"/></svg></span>
              <span class="ctrl"><svg viewBox="0 0 29 29"><path d="M10 13c-.75 0-1.500.75-1.500 1.500S9.250 16 10 16h9c.75 0 1.500-.75 1.500-1.500S19.750 13 19 13h-9z"/></svg></span>
              <span class="ctrl"><svg viewBox="0 0 29 29"><path d="m10.500 14 4-8 4 8h-8z"/><path fill="#ccc" d="m10.500 16 4 8 4-8h-8z"/></svg></span>
            </div>
          </div>
          <div class="scale">2 km</div>
          <div class="attrib"><span><a>MapLibre</a> | © <a>CARTO</a>, © <a>OpenStreetMap</a> contributors</span><svg class="attrib-i"><use href="#i-attrib"/></svg></div>
        </div>
      </div>
    </div>
    <div class="modal-actions"><button class="txt cancel">Cancel</button><button class="txt">Save</button></div>
  </div>
</div>
</body>
</html>
```

FILE: styles.css
```css
* { box-sizing: border-box; }
html, body { height: 100%; }
body {
  margin: 0;
  overflow: hidden;
  font-family: "Liberation Sans", Arial, sans-serif;
  font-size: 28px;
  color: #0b0e14;
}
button { font: inherit; }
.sprite { position: absolute; width: 0; height: 0; }

.app {
  display: grid;
  grid-template-columns: 360px 1fr;
  grid-template-rows: 1744px;
  height: 1744px;
  overflow: hidden;
  background: radial-gradient(ellipse at 50% 50%, #f0f7ff, #fff);
}

/* Sidebar */
.sidebar {
  display: flex;
  flex-direction: column;
  background: #f5f6fa;
  border-right: 2px solid #e2e3e9;
}
.brand { height: 156px; border-bottom: 2px solid #e2e3e9; }
.logo { display: block; fill: #04355a; }
.logo-name { font: 700 30px Inter, sans-serif; }
.logo-sub { font: 700 17.500px Inter, sans-serif; }
.nav { flex: 1; display: flex; flex-direction: column; padding: 32px 32px 28px; }
.nav-item {
  display: flex;
  align-items: center;
  gap: 16px;
  height: 64px;
  padding: 2px 16px 0;
  border-radius: 16px;
  color: #55575c;
}
.nav-item .ico { fill: #78809a; margin-top: -2px; }
.nav-item.is-active { background: #ebecf2; color: #0b0e14; }
.nav-item.is-active .ico { fill: #0b0e14; }
.nav-about { margin-top: auto; }
.ico { width: 32px; height: 32px; flex: none; fill: #0b0e14; }

/* Top bar */
.main { padding: 0 48px; min-width: 0; }
.topbar { display: flex; justify-content: space-between; align-items: center; height: 120px; }
.crumbs { display: flex; align-items: center; padding-top: 2px; color: #4e5873; }
.crumbs b { color: #0b0e14; }
.crumb-sep { width: 36px; height: 36px; margin: -2px 4px 0; fill: #a3a6ad; }
.tools { display: flex; gap: 16px; }
.tool {
  display: flex;
  align-items: center;
  justify-content: center;
  height: 72px;
  border: 2px solid #e2e3e9;
  border-radius: 16px;
  background: #fcfcfc;
}
.date { width: 364px; gap: 16px; padding-right: 3px; font-size: 26px; }
.cal { width: 36px; height: 36px; fill: #0b0e14; }
.sun { width: 72px; }
.rays { fill: none; stroke: #0b0e14; stroke-width: 2; stroke-linecap: round; }

/* Page content */
.content { display: grid; grid-template-columns: 1622px 1154px; gap: 16px; margin-top: 8px; }
.map-card { border: 2px solid #e6e8f0; border-radius: 16px; padding: 32px; background: #fff; }
.page-map { height: 1662px; background: #fefefe; }
.map { position: relative; overflow: hidden; height: 100%; }
.map-svg { display: block; }
.cta-row { display: grid; grid-template-columns: 570px 568px; gap: 16px; }
.cta {
  height: 80px;
  padding: 2px 0 0;
  border: 2px solid #232b3d;
  border-radius: 16px;
  color: #fdfdfd;
  background: linear-gradient(#2b3448, #07090f);
  box-shadow: inset 0 4px 0 #3a445a, inset 0 -4px 0 #000;
}
.table { border: 2px solid #e2e3e9; border-radius: 16px; background: #fdfdfd; overflow: hidden; }
.zones { margin-top: 116px; height: 846px; }
.points { margin-top: 116px; }
.row { display: grid; height: 104px; border-bottom: 2px solid #e2e3e9; }
.row.head { height: 114px; background: #f5f6fa; }
.row.last { height: 102px; }
.zones .row { grid-template-columns: 862px 288px; }
.points .row { grid-template-columns: 219px 293px 438px 200px; }
.cell { display: flex; align-items: center; padding: 2px 20px 0; white-space: nowrap; }
.last .cell { padding-top: 4px; }
.head .cell { padding-top: 0; padding-bottom: 3px; }
.end { justify-content: flex-end; }
.spread { justify-content: space-between; padding-right: 34px; }
.head .end { padding-right: 34px; }
.pill {
  display: flex;
  align-items: center;
  justify-content: flex-end;
  width: 160px;
  height: 40px;
  padding-right: 20px;
  border: 2px solid;
  border-radius: 20px;
  font-size: 23px;
  font-weight: 700;
}
.gold { background: #b98a12; border-color: #241c05; color: #3a2c05; }
.red { background: #f6e4e4; border-color: #e9bcbc; color: #8e1414; padding-right: 26px; }
.switch { position: relative; width: 68px; height: 28px; margin-left: 24px; border-radius: 14px; background: #9b9b9b; }
.switch::after {
  content: "";
  position: absolute;
  left: -6px;
  top: -6px;
  width: 40px;
  height: 40px;
  border-radius: 50%;
  background: #fdfdfd;
  box-shadow: 0 4px 8px rgba(0, 0, 0, .06), 0 2px 14px rgba(0, 0, 0, .06);
}
.switch.on { background: #93aef2; }
.switch.on::after { left: 34px; background: #1a77ef; }
.foot { display: flex; justify-content: flex-end; gap: 16px; height: 108px; padding: 22px 32px 0; background: #f5f6fa; }
.range { padding-right: 24px; line-height: 66px; }
.pg { display: flex; align-items: center; justify-content: center; width: 64px; height: 64px; border: 2px solid #e0e1e6; border-radius: 16px; }
.pg .ico { fill: #a8a9ad; }
.row .acts { gap: 24px; padding-bottom: 32px; padding-left: 28px; }
.edit, .del { width: 48px; height: 48px; flex: none; }
.edit { fill: #4c556f; }
.del { fill: #0f5fc4; }

/* Map widgets */
.ctrl-stack { position: absolute; top: 20px; right: 20px; display: grid; gap: 20px; }
.ctrl-group { border-radius: 8px; background: #fff; box-shadow: 0 0 0 4px rgba(0, 0, 0, .1); }
.ctrl { display: block; width: 58px; height: 58px; }
.ctrl + .ctrl { border-top: 2px solid #ddd; }
.ctrl svg { display: block; width: 58px; height: 58px; fill: #333; }
.ctrl + .ctrl svg { margin-top: -1px; }
.scale {
  position: absolute;
  left: 20px;
  bottom: 20px;
  width: 156px;
  height: 44px;
  padding: 0 10px;
  border: 4px solid #333;
  border-top: 0;
  background: rgba(255, 255, 255, .75);
  font-size: 20px;
  line-height: 40px;
  color: #333;
}
.scale-5 { width: 140px; }
.attrib {
  position: absolute;
  right: 20px;
  bottom: 20px;
  display: flex;
  align-items: center;
  height: 48px;
  padding-left: 16px;
  border-radius: 24px;
  background: #fff;
  font-size: 24px;
  color: #000;
  white-space: nowrap;
}
.attrib a { color: #404040; }
.attrib-i { width: 48px; height: 48px; margin-left: 8px; border-radius: 50%; background: #f2f2f2; }

/* City map */
.map-svg path { vector-effect: non-scaling-stroke; stroke-linejoin: round; stroke-linecap: round; }
.beige { fill: #f7f3eb; }
.green { fill: #e8efdb; }
.deep { fill: #dcebce; }
.water { fill: #cbe1e4; stroke: #b3d1d8; stroke-width: 1; }
.streets { fill: none; stroke: #fffefb; stroke-width: 1.500; }
.dash { fill: none; stroke: #e9cdd2; stroke-width: 1.500; stroke-dasharray: 4 3; }
.river { fill: none; stroke: #b9dae1; stroke-width: 2; }
.river.wide { stroke-width: 4; }
.pale-case, .pale-fill, .major-case, .major-fill { fill: none; }
.pale-case { stroke: #fde2af; stroke-width: 6.500; }
.pale-fill { stroke: #fff5ce; stroke-width: 3.500; }
.major-case { stroke: #fcd692; stroke-width: 6.500; }
.major-fill { stroke: #fee4a1; stroke-width: 4.500; }
.labels text {
  font-family: Inter, "Open Sans", sans-serif;
  font-weight: 600;
  fill: #405b7c;
  paint-order: stroke;
  stroke: #fbf9f6;
  stroke-width: 3;
  stroke-linejoin: round;
}
.labels .soft { fill: #dedede; stroke: none; }
.labels .creek { fill: #5b97a3; font-style: italic; font-weight: 400; stroke: #e3f0f1; }
.zone { fill: #ffaa0f; fill-opacity: .4; stroke: #ffb029; stroke-width: 3.500; }
.pin { position: absolute; left: 519px; top: 381px; }

/* Region map */
.g2 { fill: #e2e6d2; }
.b2 { fill: #efe7de; }
.w2 { fill: #b4d3da; }
.r2, .v2, .c2, .d2 { fill: none; stroke-width: 3; }
.r2 { stroke: #f8cf80; }
.v2 { stroke: #d8c4cc; }
.c2 { stroke: #a5cdd6; }
.d2 { stroke: #dfb8b8; stroke-width: 2; stroke-dasharray: 6 5; }
.lbl-soft2 { font-family: Inter, sans-serif; font-weight: 500; fill: #a4a9ab; }

/* Dialog */
.backdrop {
  position: fixed;
  inset: 0;
  display: flex;
  align-items: center;
  justify-content: center;
  padding-top: 4px;
  background: rgba(0, 0, 0, .5);
}
.modal {
  display: flex;
  flex-direction: column;
  width: 2400px;
  height: 1344px;
  padding: 0 48px;
  border: 2px solid #e3e6ee;
  border-radius: 20px;
  background: #f5f6fa;
  box-shadow: 0 22px 30px -14px rgba(0, 0, 0, .2), 0 48px 76px 6px rgba(0, 0, 0, .14), 0 18px 92px 16px rgba(0, 0, 0, .12);
}
.modal-title { margin: 0; height: 122px; font-size: 36px; line-height: 120px; font-weight: 700; }
.modal-body { display: grid; grid-template-columns: 1134px 1134px; gap: 32px; height: 1066px; }
.fields { display: flex; flex-direction: column; gap: 54px; padding-top: 32px; }
.field {
  position: relative;
  display: flex;
  align-items: center;
  justify-content: space-between;
  height: 80px;
  padding: 2px 14px 0 24px;
  border: 2px solid #e6e7ec;
  border-radius: 16px;
  background: #fdfdfd;
}
.field label { position: absolute; left: 26px; top: -16px; font-size: 21px; line-height: 24px; color: #4e5873; }
.select {
  background: #f5f6fa;
  border-color: #d9dde6;
  box-shadow: inset 0 4px 0 #fcfcfe, inset 0 -4px 0 #e8ebf4;
}
.tight { margin-bottom: -6px; }
.unfold { width: 40px; height: 40px; margin-top: -2px; fill: #707378; }
.modal-actions { display: flex; justify-content: flex-end; gap: 68px; padding-top: 79px; }
.txt { border: 0; padding: 0; background: none; line-height: 36px; color: #4e5873; }
.cancel { color: #0d59b7; }
```
